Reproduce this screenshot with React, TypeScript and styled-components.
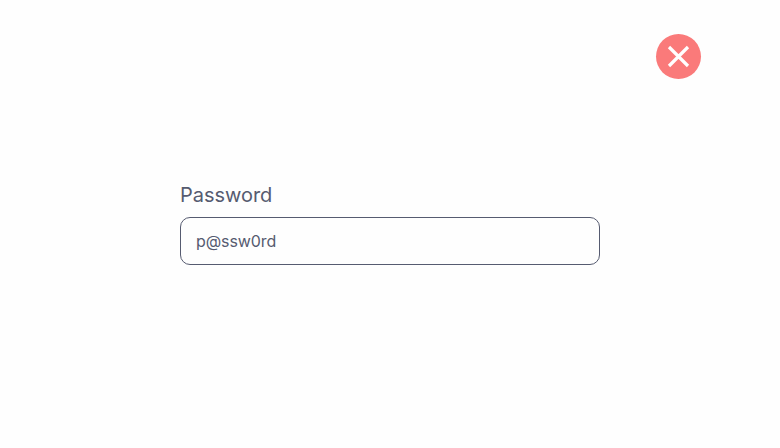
import React from "react";
import styled, { createGlobalStyle } from "styled-components";

const GlobalStyle = createGlobalStyle`
  *, *::before, *::after { box-sizing: border-box; }
  body { margin: 0; background: #fefefe; font-family: Inter, sans-serif; }
`;

const Page = styled.main`
  display: flex;
  flex-direction: column;
  height: 448px;
  background: #fefefe;
`;

const Header = styled.header`
  display: flex;
  justify-content: flex-end;
  padding: 34px 79px 0 0;
`;

const Status = styled.span`
  display: flex;
  align-items: center;
  justify-content: center;
  width: 45px;
  height: 45px;
  border-radius: 50%;
  background: #fa7a7a;
`;

const Field = styled.div`
  display: flex;
  flex-direction: column;
  width: 420px;
  margin: 104px 0 0 180px;
`;

const Label = styled.label`
  font-size: 20px;
  line-height: 24px;
  letter-spacing: -0.03px;
  color: #565b70;
`;

const Input = styled.input`
  height: 48px;
  margin-top: 10px;
  padding: 0 15px;
  border: 1px solid #565b70;
  border-radius: 10px;
  outline: none;
  background: #fefefe;
  font: 16px Inter, sans-serif;
  letter-spacing: -0.1px;
  color: #565b70;
`;

export default function App() {
  return (
    <Page>
      <GlobalStyle />
      <Header>
        <Status>
          <svg width="45" height="45" viewBox="0 0 45 45" fill="none" stroke="#fff" strokeWidth="3.2">
            <path d="M13 13L32 32M32 13L13 32" />
          </svg>
        </Status>
      </Header>
      <Field>
        <Label htmlFor="password">Password</Label>
        <Input id="password" type="text" defaultValue="p@ssw0rd" />
      </Field>
    </Page>
  );
}
